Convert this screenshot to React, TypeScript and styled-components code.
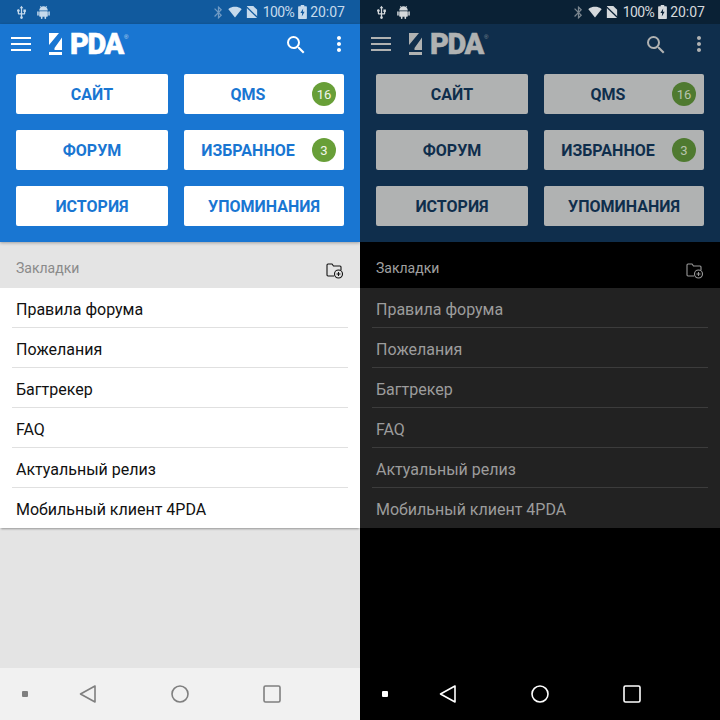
import React from "react";
import styled, { createGlobalStyle, ThemeProvider } from "styled-components";
import { MdUsb, MdBluetooth, MdSearch, MdMoreVert, MdSignalWifi4Bar } from "react-icons/md";

const Global = createGlobalStyle`
  html, body { margin: 0; padding: 0; background: #000; }
  * { box-sizing: border-box; }
`;

const light = {
  status: "#115A9E", header: "#1976D2", btn: "#ffffff", btnText: "#1976D2", icon: "#ffffff",
  statusText: "#C6DAEC", statusDim: "#6F9AC4", statusCut: "#115A9E", section: "#E4E4E4", sectionText: "#8A8A8A",
  folder: "#111111", list: "#ffffff", listText: "#111111", divider: "#E0E0E0", page: "#E4E4E4",
  nav: "#F1F1F1", navIcon: "#7F7F7F", badge: "#689F38", badgeText: "#F2F6EC",
  listShadow: "0 2px 2px -1px rgba(0,0,0,.35)", headShadow: "0 1px 3px rgba(0,0,0,.3)",
};
const dark = {
  status: "#0A2135", header: "#0F2E4C", btn: "#B0B2B2", btnText: "#0F2E4C", icon: "#B0B2B2",
  statusText: "#D5D9DC", statusDim: "#7A858E", statusCut: "#0A2135", section: "#000000", sectionText: "#A0A0A0",
  folder: "#9A9A9A", list: "#222222", listText: "#9C9C9C", divider: "#3C3C3C", page: "#000000",
  nav: "#000000", navIcon: "#FFFFFF", badge: "#4F7A30", badgeText: "#B9C4AE",
  listShadow: "none", headShadow: "none",
};

const Screens = styled.div`
  display: flex;
  width: 720px;
  height: 720px;
`;
const Phone = styled.div`
  width: 360px;
  height: 720px;
  display: flex;
  flex-direction: column;
  background: ${p => p.theme.page};
  font-family: Roboto, "Noto Sans", sans-serif;
`;
const StatusBar = styled.div`
  height: 24px;
  flex: none;
  background: ${p => p.theme.status};
  display: flex;
  align-items: center;
  padding: 0 15px 0 14px;
  color: ${p => p.theme.statusText};
  font-size: 14px;
`;
const StatusLeft = styled.div`
  display: flex;
  align-items: center;
  gap: 8px;
  flex: 1;
`;
const StatusRight = styled.div`
  display: flex;
  align-items: center;
`;
const BtIcon = styled(MdBluetooth)`
  color: ${p => p.theme.statusDim};
  margin-right: 2px;
`;
const Percent = styled.span`
  letter-spacing: -0.6px;
  margin: 0 4px 0 5px;
`;
const StatusGlyph = styled.svg`
  flex: none;
  fill: currentColor;
`;
const WifiIcon = styled(MdSignalWifi4Bar)`
  margin-right: 4px;
`;
const Clock = styled.span`
  margin-left: 3px;
`;
const Header = styled.div`
  height: 218px;
  flex: none;
  background: ${p => p.theme.header};
  box-shadow: ${p => p.theme.headShadow};
  position: relative;
  z-index: 1;
  display: flex;
  flex-direction: column;
`;
const Toolbar = styled.div`
  height: 40px;
  margin-bottom: 10px;
  display: flex;
  align-items: center;
  padding: 0 9px 0 11px;
  color: ${p => p.theme.icon};
`;
const Burger = styled.svg`
  width: 20px;
  height: 14px;
  margin-right: 18px;
  flex: none;
`;
const LogoBox = styled.div`
  display: flex;
  align-items: center;
  flex: 1;
  height: 22px;
`;
const LogoMark = styled.svg`
  width: 14px;
  height: 22px;
  flex: none;
  margin-right: 7px;
`;
const LogoText = styled.span`
  font-family: Roboto, sans-serif;
  font-weight: 900;
  font-size: 29px;
  line-height: 22px;
  letter-spacing: -1.4px;
  -webkit-text-stroke: .5px currentColor;
`;
const LogoReg = styled.span`
  font-family: "Liberation Sans", sans-serif;
  font-size: 6px;
  margin: -14px 0 0 1px;
  opacity: .7;
`;
const ToolIcons = styled.div`
  display: flex;
  align-items: center;
  gap: 19px;
`;
const SearchIcon = styled(MdSearch)`
  margin-top: 2px;
`;
const Grid = styled.div`
  display: grid;
  grid-template-columns: 152px 160px;
  grid-auto-rows: 40px;
  column-gap: 16px;
  row-gap: 16px;
  padding: 0 16px;
`;
const Tile = styled.div`
  position: relative;
  background: ${p => p.theme.btn};
  color: ${p => p.theme.btnText};
  border-radius: 2px;
  display: flex;
  align-items: center;
  justify-content: center;
  font-size: 16px;
  font-weight: 700;
  padding-top: 1px;
  padding-right: ${p => (p.$badged ? 32 : 0)}px;
`;
const Badge = styled.span`
  position: absolute;
  right: 8px;
  top: 8px;
  width: 24px;
  height: 24px;
  border-radius: 50%;
  background: ${p => p.theme.badge};
  color: ${p => p.theme.badgeText};
  font-size: 13px;
  font-weight: 400;
  display: flex;
  align-items: center;
  justify-content: center;
`;
const SectionHead = styled.div`
  height: 46px;
  flex: none;
  background: ${p => p.theme.section};
  color: ${p => p.theme.sectionText};
  display: flex;
  align-items: center;
  justify-content: space-between;
  padding: 6px 16px 0;
  font-size: 14px;
`;
const FolderIcon = styled.svg`
  width: 18px;
  height: 16px;
  margin-top: 6px;
  color: ${p => p.theme.folder};
`;
const List = styled.div`
  background: ${p => p.theme.list};
  box-shadow: ${p => p.theme.listShadow};
  flex: none;
`;
const Row = styled.div`
  height: 40px;
  margin: 0 12px;
  padding: 3px 4px 0;
  display: flex;
  align-items: center;
  color: ${p => p.theme.listText};
  font-size: 16px;
  border-bottom: 1px solid ${p => (p.$last ? "transparent" : p.theme.divider)};
`;
const Spacer = styled.div`
  flex: 1;
`;
const NavBar = styled.div`
  height: 52px;
  flex: none;
  background: ${p => p.theme.nav};
  color: ${p => p.theme.navIcon};
  display: grid;
  grid-template-columns: 42px 92px 92px 92px;
  justify-items: center;
  align-items: center;
`;
const NavDot = styled.span`
  width: 6px;
  height: 6px;
  background: currentColor;
  border-radius: 1px;
  justify-self: start;
  margin-left: 22px;
`;
const NavIcon = styled.svg`
  width: 20px;
  height: 20px;
  fill: none;
  stroke: currentColor;
  stroke-width: 1.6;
  stroke-linejoin: round;
`;

const cells: [string, string | null][] = [
  ["САЙТ", null], ["QMS", "16"],
  ["ФОРУМ", null], ["ИЗБРАННОЕ", "3"],
  ["ИСТОРИЯ", null], ["УПОМИНАНИЯ", null],
];
const rows = ["Правила форума", "Пожелания", "Багтрекер", "FAQ", "Актуальный релиз", "Мобильный клиент 4PDA"];

const AndroidBot = () => (
  <StatusGlyph width="13" height="14" viewBox="0 0 13 14">
    <path d="M2.2 5.6a4.3 4.3 0 0 1 8.6 0z" />
    <path d="M3.2 1 4.5 2.6M9.8 1 8.5 2.6" stroke="currentColor" strokeWidth=".8" />
    <rect x="2.2" y="6.2" width="8.6" height="5.6" rx=".8" />
    <rect x=".2" y="6.2" width="1.5" height="4.6" rx=".7" />
    <rect x="11.3" y="6.2" width="1.5" height="4.6" rx=".7" />
    <rect x="3.9" y="11" width="1.6" height="3" rx=".7" />
    <rect x="7.5" y="11" width="1.6" height="3" rx=".7" />
  </StatusGlyph>
);

const NoSim = ({ cut }: { cut: string }) => (
  <StatusGlyph width="12" height="12" viewBox="0 0 14 14">
    <path d="M1 0h7.5L13 4.5V14H1z" />
    <path d="M0 .5 14 14" stroke={cut} strokeWidth="1.5" />
  </StatusGlyph>
);

const Battery = ({ cut }: { cut: string }) => (
  <StatusGlyph width="9" height="14" viewBox="0 0 10 16">
    <path d="M3 0h4v1.5h2.2a.8.8 0 0 1 .8.8V15.2a.8.8 0 0 1-.8.8H.8a.8.8 0 0 1-.8-.8V2.3a.8.8 0 0 1 .8-.8H3z" />
    <path d="M5.8 4 2.6 9.2h2L4.2 13l3.2-5.4h-2z" fill={cut} />
  </StatusGlyph>
);

const PhoneScreen = ({ theme }: { theme: typeof light }) => (
  <ThemeProvider theme={theme}>
    <Phone>
      <StatusBar>
        <StatusLeft>
          <MdUsb size={15} />
          <AndroidBot />
        </StatusLeft>
        <StatusRight>
          <BtIcon size={15} />
          <WifiIcon size={14} />
          <NoSim cut={theme.statusCut} />
          <Percent>100%</Percent>
          <Battery cut={theme.statusCut} />
          <Clock>20:07</Clock>
        </StatusRight>
      </StatusBar>
      <Header>
        <Toolbar>
          <Burger viewBox="0 0 20 14" fill="currentColor">
            <rect y="0" width="20" height="2" />
            <rect y="6" width="20" height="2" />
            <rect y="12" width="20" height="2" />
          </Burger>
          <LogoBox>
            <LogoMark viewBox="0 0 14 22" fill="currentColor">
              <path d="M0 0h10L0 12zM13 4.5V17H5.5V15zM0 19h13v3H0z" />
            </LogoMark>
            <LogoText>PDA</LogoText>
            <LogoReg>®</LogoReg>
          </LogoBox>
          <ToolIcons>
            <SearchIcon size={24} />
            <MdMoreVert size={24} />
          </ToolIcons>
        </Toolbar>
        <Grid>
          {cells.map(([label, badge]) => (
            <Tile key={label} $badged={!!badge}>
              {label}
              {badge && <Badge>{badge}</Badge>}
            </Tile>
          ))}
        </Grid>
      </Header>
      <SectionHead>
        Закладки
        <FolderIcon viewBox="0 0 18 16" fill="none" stroke="currentColor" strokeWidth="1.1">
          <path d="M8 13H2a1 1 0 0 1-1-1V2a1 1 0 0 1 1-1h4l1.5 2H14a1 1 0 0 1 1 1v3" />
          <circle cx="12.5" cy="11" r="4" />
          <path d="M12.5 9v4M10.5 11h4" />
        </FolderIcon>
      </SectionHead>
      <List>
        {rows.map((r, i) => (
          <Row key={r} $last={i === rows.length - 1}>{r}</Row>
        ))}
      </List>
      <Spacer />
      <NavBar>
        <NavDot />
        <NavIcon viewBox="0 0 20 20"><path d="M2.5 10 17 2v16z" /></NavIcon>
        <NavIcon viewBox="0 0 20 20"><circle cx="10" cy="10" r="8" /></NavIcon>
        <NavIcon viewBox="0 0 20 20"><rect x="2" y="2" width="16" height="16" rx="1.5" /></NavIcon>
      </NavBar>
    </Phone>
  </ThemeProvider>
);

export default function App() {
  return (
    <>
      <Global />
      <Screens>
        <PhoneScreen theme={light} />
        <PhoneScreen theme={dark} />
      </Screens>
    </>
  );
}
